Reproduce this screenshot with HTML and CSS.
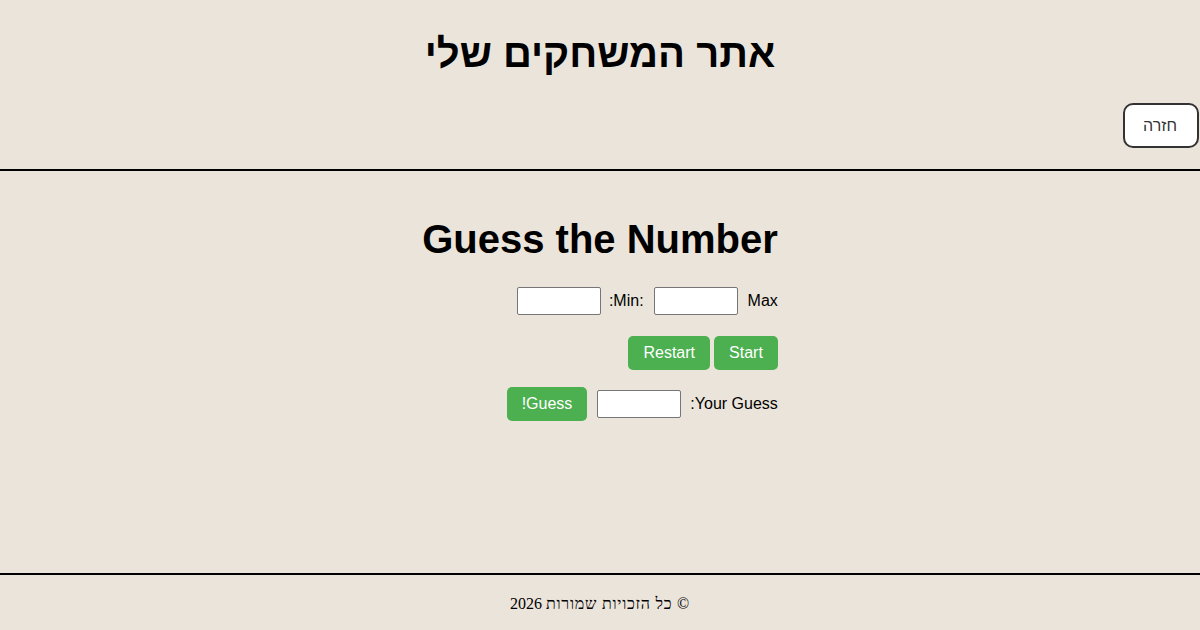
FILE: index.html
```html
<!DOCTYPE html>
<html lang="he" dir="rtl">
<head>
<meta charset="utf-8">
<title>אתר המשחקים שלי</title>
<link rel="stylesheet" href="styles.css">
</head>
<body>
<header class="site-header">
  <h1 class="site-title">אתר המשחקים שלי</h1>
  <div class="nav">
    <button class="back-btn">חזרה</button>
  </div>
</header>
<main class="main">
  <div class="game">
    <h1 class="game-title">Guess the Number</h1>
    <div class="row row-range">
      <input class="num-input" type="text">
      <span class="label label-min">:Min:</span>
      <input class="num-input" type="text">
      <span class="label label-max">Max</span>
    </div>
    <div class="row row-actions">
      <button class="green-btn">Restart</button>
      <button class="green-btn btn-start">Start</button>
    </div>
    <div class="row row-guess">
      <button class="green-btn">!Guess</button>
      <input class="num-input guess-input" type="text">
      <span class="label">:Your Guess</span>
    </div>
  </div>
</main>
<footer class="site-footer"><span class="footer-he">© כל הזכויות שמורות</span> 2026</footer>
</body>
</html>
```
FILE: styles.css
```css
html, body {
  margin: 0;
  padding: 0;
}
body {
  background: #ebe4da;
  font-family: "Liberation Sans", Arial, sans-serif;
  color: #000;
  min-height: 100vh;
  display: flex;
  flex-direction: column;
}
.site-header {
  border-bottom: 2px solid #000;
  padding-bottom: 21px;
}
.site-title {
  margin: 30px 0 27px;
  font-size: 40px;
  font-weight: bold;
  line-height: 46px;
  text-align: center;
}
.nav {
  display: flex;
  justify-content: flex-start;
}
.back-btn {
  font-family: "Liberation Sans", Arial, sans-serif;
  font-size: 16px;
  line-height: 17px;
  color: #333;
  background: #fff;
  border: 2px solid #333;
  border-radius: 10px;
  padding: 12px 20px;
  width: 76px;
  height: 45px;
  margin: 0 1px 0 0;
  cursor: pointer;
}
.main {
  flex: 1;
  display: flex;
  justify-content: center;
  padding-top: 45px;
}
.game {
  text-align: right;
}
.game-title {
  margin: 0 0 25px;
  font-size: 40px;
  line-height: 46px;
  font-weight: bold;
  text-align: right;
}
.row {
  direction: ltr;
  display: flex;
  justify-content: flex-end;
  align-items: center;
  font-size: 16px;
}
.row-range {
  height: 28px;
}
.row-actions {
  margin-top: 21px;
  height: 34px;
}
.row-guess {
  margin-top: 17px;
  height: 34px;
}
.num-input {
  box-sizing: border-box;
  width: 84px;
  height: 28px;
  border: 1px solid #767676;
  border-radius: 2px;
  background: #fff;
  padding: 1px 2px;
  font-size: 13px;
}
.label {
  white-space: pre;
  line-height: 18px;
}
.label-min {
  margin: 0 10px 0 8px;
}
.label-max {
  margin-left: 10px;
}
.green-btn {
  font-family: "Liberation Sans", Arial, sans-serif;
  font-size: 16px;
  line-height: 18px;
  background: #4caf50;
  color: #fff;
  border: none;
  border-radius: 5px;
  padding: 8px 15px;
  height: 34px;
  cursor: pointer;
}
.btn-start {
  margin-left: 4px;
}
.guess-input {
  margin: 0 9px 0 10px;
}
.site-footer {
  border-top: 2px solid #000;
  padding: 20px 0 17px;
  text-align: center;
  font-family: "Liberation Serif", "Times New Roman", serif;
  font-size: 16px;
  line-height: 18px;
}
.footer-he {
  letter-spacing: 0.75px;
}
```
